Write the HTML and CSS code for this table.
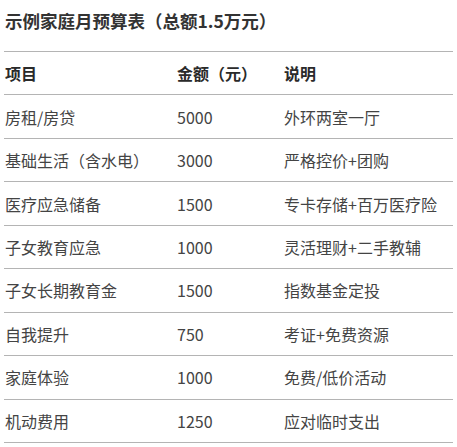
FILE: index.html
```html
<!DOCTYPE html>
<html lang="zh-CN">
<head>
<meta charset="utf-8">
<link rel="stylesheet" href="styles.css">
</head>
<body>
<div class="wrap">
  <h1 class="title">示例家庭月预算表（总额1.5万元）</h1>
  <div class="table">
    <div class="row head"><span>项目</span><span>金额（元）</span><span>说明</span></div>
    <div class="row"><span>房租/房贷</span><span>5000</span><span>外环两室一厅</span></div>
    <div class="row"><span>基础生活（含水电）</span><span>3000</span><span>严格控价+团购</span></div>
    <div class="row"><span>医疗应急储备</span><span>1500</span><span>专卡存储+百万医疗险</span></div>
    <div class="row"><span>子女教育应急</span><span>1000</span><span>灵活理财+二手教辅</span></div>
    <div class="row"><span>子女长期教育金</span><span>1500</span><span>指数基金定投</span></div>
    <div class="row"><span>自我提升</span><span>750</span><span>考证+免费资源</span></div>
    <div class="row"><span>家庭体验</span><span>1000</span><span>免费/低价活动</span></div>
    <div class="row"><span>机动费用</span><span>1250</span><span>应对临时支出</span></div>
  </div>
</div>
</body>
</html>
```

FILE: styles.css
```css
html, body {
  margin: 0;
  padding: 0;
  background: #fff;
}
body {
  font-family: "Noto Sans CJK SC", "Noto Sans", sans-serif;
  color: #444;
}
.wrap {
  padding: 0 4px 0 4px;
  width: 449px;
}
.title {
  margin: 0;
  height: 52px;
  box-sizing: border-box;
  padding: 8px 0 0 1px;
  font-size: 17.5px;
  line-height: 26px;
  font-weight: 700;
  color: #333;
  border-bottom: 1px solid #b4b4b4;
}
.row {
  display: grid;
  grid-template-columns: 172px 107px 1fr;
  align-items: center;
  height: 43.44px;
  box-sizing: border-box;
  border-bottom: 1px solid #b4b4b4;
  font-size: 16px;
  line-height: 20px;
  padding: 0 0 0 1px;
}
.row span {
  white-space: nowrap;
}
.head {
  font-weight: 700;
  color: #2a2a2a;
}
```
